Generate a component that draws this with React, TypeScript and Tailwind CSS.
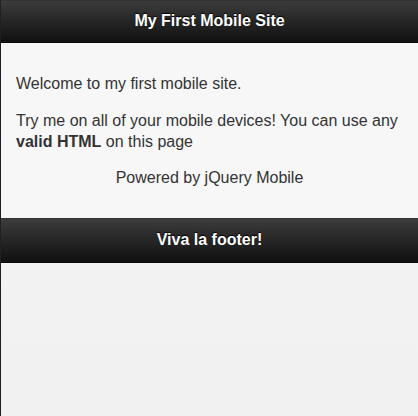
import React from "react";

export default function App() {
  const font = { fontFamily: '"Liberation Sans", Arial, Helvetica, sans-serif' };
  return (
    <div
      className="flex min-h-[416px] w-full flex-col border-l border-[#1c2029] bg-gradient-to-b from-[#f4f4f4] to-[#f1f1f1] text-[16px] leading-[1.3] text-[#333]"
      style={font}
    >
      <div className="flex h-[43px] items-center justify-center border-y border-t-[#333] border-b-[#0a0a0a] bg-gradient-to-b from-[#3c3c3c] to-[#111] text-white [text-shadow:0_-1px_1px_#000]">
        <h1 className="text-[16px] font-bold leading-[1.3]">My First Mobile Site</h1>
      </div>
      <div className="h-[175px] bg-[#f7f7f7] px-[15px] pt-[15px]">
        <p className="my-4">Welcome to my first mobile site.</p>
        <p className="my-4">
          Try me on all of your mobile devices! You can use any <b>valid HTML</b> on this page
        </p>
        <p className="my-4 text-center">Powered by jQuery Mobile</p>
      </div>
      <div className="flex h-[45px] items-center justify-center border-y border-t-[#333] border-b-[#0a0a0a] bg-gradient-to-b from-[#3c3c3c] to-[#111] text-white [text-shadow:0_-1px_1px_#000]">
        <h4 className="text-[16px] font-bold leading-[1.3]">Viva la footer!</h4>
      </div>
      <div className="flex-1" />
    </div>
  );
}
